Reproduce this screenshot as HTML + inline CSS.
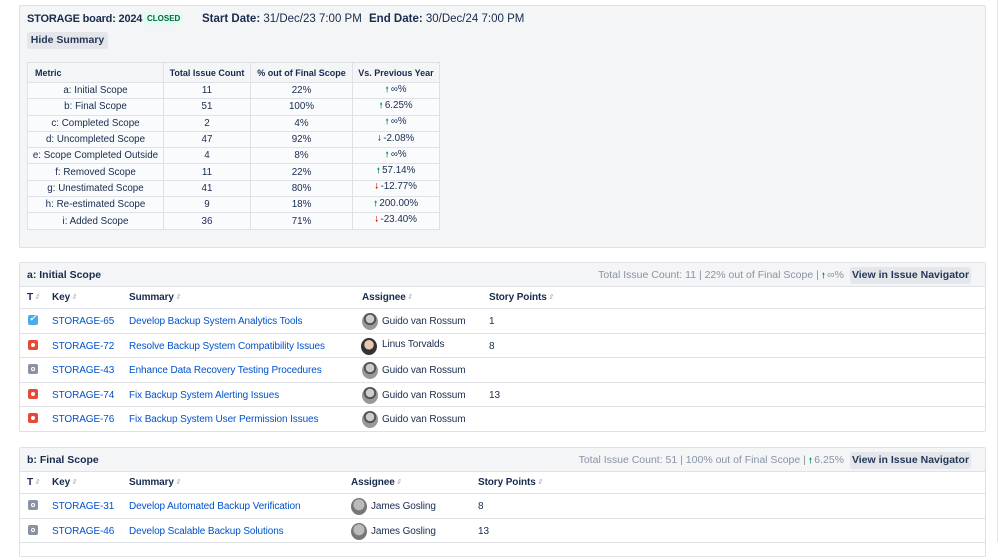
<!DOCTYPE html>
<html><head><meta charset="utf-8"><style>
*{box-sizing:border-box;margin:0;padding:0}
body{width:999px;height:542px;overflow:hidden;background:#fff;font-family:"Liberation Sans",sans-serif;font-size:10px;color:#172b4d;position:relative}
.abs{position:absolute}
.box{position:absolute;left:19px;width:967px;border:1px solid #dfe1e6;border-radius:2px}
.sum{top:5px;height:243px;background:#f4f5f7}
.btn{position:absolute;background:#e4e6ea;border-radius:3px;font-weight:bold;color:#253858;font-size:10.5px;text-align:center}
table.m{position:absolute;left:27px;top:62px;border-collapse:collapse;background:#fafbfc;table-layout:fixed;width:412px}
table.m td,table.m th{border:1px solid #dfe1e6;height:16.3px;text-align:center;font-size:9.8px;padding:0 2px;white-space:nowrap;font-weight:normal;overflow:hidden}
table.m th{height:20px;font-weight:bold;background:#f4f5f7;font-size:9px}
.up{color:#00875a;font-size:8px;margin-right:2px}.dn{color:#de350b;font-size:8px;margin-right:2px}
.hd{position:absolute;left:0;right:0;top:0;height:24px;background:#f4f5f7;border-bottom:1px solid #dfe1e6}
.hd b{position:absolute;left:7px;top:6px;font-size:10.5px}
.hd .st{position:absolute;right:141px;top:6px;color:#8993a4;font-size:10.5px}
.row{position:absolute;left:0;right:0;border-bottom:1px solid #dfe1e6;height:24.5px}
.row span{position:absolute;top:7px;white-space:nowrap;font-size:10px;letter-spacing:-0.1px}
.ch span{font-weight:bold;top:5px;font-size:10px}
.a{color:#0052cc}
.ic{position:absolute;top:6px;left:8px;width:10px;height:10px;border-radius:2px}
.ic.bug{background:#e5493a}.ic.bug:after{content:"";position:absolute;left:3px;top:3px;width:4px;height:4px;border-radius:50%;background:#fff}
.ic.task{background:#4bade8}.ic.task:after{content:"✓";position:absolute;left:1px;top:-2px;color:#fff;font-size:9px;font-weight:bold}
.ic.imp{background:#8993a4}.ic.imp:after{content:"";position:absolute;left:3px;top:3px;width:4px;height:4px;border-radius:50%;border:1px solid #fff;box-sizing:border-box}
.av{position:absolute;top:4px;width:16px;height:17px;border-radius:50%;background:radial-gradient(circle at 50% 35%,#ccc 0 30%,#555 32% 45%,#999 47%)}
.ar{color:#a5adba;font-size:7px;font-weight:normal;vertical-align:1px;margin-left:1px}
</style></head><body>
<div class="box sum">
 <div class="abs" style="left:7px;top:7px;font-weight:bold;font-size:11px;letter-spacing:-0.2px">STORAGE board: 2024</div>
 <div class="abs" style="left:124px;top:6px;background:#e3fcef;color:#006644;font-weight:bold;font-size:8px;padding:2px 3px">CLOSED</div>
 <div class="abs" style="left:182px;top:7px;font-size:11.5px"><b>Start Date:</b> 31/Dec/23 7:00 PM</div>
 <div class="abs" style="left:349px;top:7px;font-size:11.5px"><b>End Date:</b> 30/Dec/24 7:00 PM</div>
 <div class="btn" style="left:7px;top:26px;width:81px;height:17px;line-height:17px">Hide Summary</div>
</div>
<table class="m">
<colgroup><col style="width:136px"><col style="width:87px"><col style="width:102px"><col style="width:87px"></colgroup>
<tr><th style="text-align:left;padding-left:7px">Metric</th><th>Total Issue Count</th><th>% out of Final Scope</th><th>Vs. Previous Year</th></tr>
<tr><td>a: Initial Scope</td><td>11</td><td>22%</td><td><span class="up">🠕</span>∞%</td></tr>
<tr><td>b: Final Scope</td><td>51</td><td>100%</td><td><span class="up">🠕</span>6.25%</td></tr>
<tr><td>c: Completed Scope</td><td>2</td><td>4%</td><td><span class="up">🠕</span>∞%</td></tr>
<tr><td>d: Uncompleted Scope</td><td>47</td><td>92%</td><td><span class="dn">🠗</span>-2.08%</td></tr>
<tr><td>e: Scope Completed Outside</td><td>4</td><td>8%</td><td><span class="up">🠕</span>∞%</td></tr>
<tr><td>f: Removed Scope</td><td>11</td><td>22%</td><td><span class="up">🠕</span>57.14%</td></tr>
<tr><td>g: Unestimated Scope</td><td>41</td><td>80%</td><td><span class="dn">🠗</span>-12.77%</td></tr>
<tr><td>h: Re-estimated Scope</td><td>9</td><td>18%</td><td><span class="up">🠕</span>200.00%</td></tr>
<tr><td>i: Added Scope</td><td>36</td><td>71%</td><td><span class="dn">🠗</span>-23.40%</td></tr>
</table>

<div class="box" style="top:262px;height:170px">
 <div class="hd"><b>a: Initial Scope</b><span class="st">Total Issue Count: 11 | 22% out of Final Scope | <span class="up">🠕</span>∞%</span>
  <div class="btn" style="right:14px;top:4px;width:121px;height:17px;line-height:17px">View in Issue Navigator</div></div>
 <div class="row ch" style="top:24px;height:22px"><span style="left:7px">T<i class="ar">⇕</i></span><span style="left:32px">Key<i class="ar">⇕</i></span><span style="left:109px">Summary<i class="ar">⇕</i></span><span style="left:342px">Assignee<i class="ar">⇕</i></span><span style="left:469px">Story Points<i class="ar">⇕</i></span></div>
 <div class="row" style="top:46px"><i class="ic task"></i><span class="a" style="left:32px">STORAGE-65</span><span class="a" style="left:109px">Develop Backup System Analytics Tools</span><i class="av" style="left:342px"></i><span style="left:362px">Guido van Rossum</span><span style="left:469px">1</span></div>
 <div class="row" style="top:70.5px"><i class="ic bug"></i><span class="a" style="left:32px">STORAGE-72</span><span class="a" style="left:109px">Resolve Backup System Compatibility Issues</span><i class="av" style="left:341px;background:radial-gradient(circle at 50% 40%,#e8c8b0 0 35%,#333 38%)"></i><span style="left:362px;top:5px">Linus Torvalds</span><span style="left:469px">8</span></div>
 <div class="row" style="top:95px"><i class="ic imp"></i><span class="a" style="left:32px">STORAGE-43</span><span class="a" style="left:109px">Enhance Data Recovery Testing Procedures</span><i class="av" style="left:342px"></i><span style="left:362px">Guido van Rossum</span></div>
 <div class="row" style="top:119.5px"><i class="ic bug"></i><span class="a" style="left:32px">STORAGE-74</span><span class="a" style="left:109px">Fix Backup System Alerting Issues</span><i class="av" style="left:342px"></i><span style="left:362px">Guido van Rossum</span><span style="left:469px">13</span></div>
 <div class="row" style="top:144px;border-bottom:none"><i class="ic bug"></i><span class="a" style="left:32px">STORAGE-76</span><span class="a" style="left:109px">Fix Backup System User Permission Issues</span><i class="av" style="left:342px"></i><span style="left:362px">Guido van Rossum</span></div>
</div>

<div class="box" style="top:447px;height:110px">
 <div class="hd"><b>b: Final Scope</b><span class="st">Total Issue Count: 51 | 100% out of Final Scope | <span class="up">🠕</span>6.25%</span>
  <div class="btn" style="right:14px;top:4px;width:121px;height:17px;line-height:17px">View in Issue Navigator</div></div>
 <div class="row ch" style="top:24px;height:22px"><span style="left:7px">T<i class="ar">⇕</i></span><span style="left:32px">Key<i class="ar">⇕</i></span><span style="left:109px">Summary<i class="ar">⇕</i></span><span style="left:331px">Assignee<i class="ar">⇕</i></span><span style="left:458px">Story Points<i class="ar">⇕</i></span></div>
 <div class="row" style="top:46px"><i class="ic imp"></i><span class="a" style="left:32px">STORAGE-31</span><span class="a" style="left:109px">Develop Automated Backup Verification</span><i class="av" style="left:331px;background:radial-gradient(circle at 50% 40%,#bbb 0 40%,#777 45%)"></i><span style="left:351px">James Gosling</span><span style="left:458px">8</span></div>
 <div class="row" style="top:70.5px"><i class="ic imp"></i><span class="a" style="left:32px">STORAGE-46</span><span class="a" style="left:109px">Develop Scalable Backup Solutions</span><i class="av" style="left:331px;background:radial-gradient(circle at 50% 40%,#bbb 0 40%,#777 45%)"></i><span style="left:351px">James Gosling</span><span style="left:458px">13</span></div>
</div>
<div class="abs" style="left:997px;top:0;width:1px;height:542px;background:#e6e6e6"></div>
</body></html>
